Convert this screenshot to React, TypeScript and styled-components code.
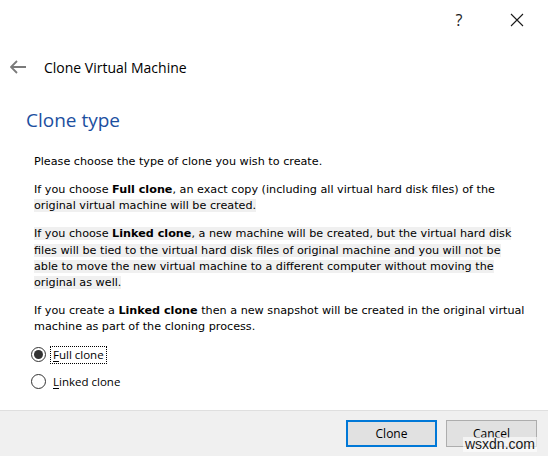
import React from "react";
import styled, { createGlobalStyle } from "styled-components";

const GlobalStyle = createGlobalStyle`
  html, body { margin: 0; padding: 0; background: #ffffff; }
  #root { width: 548px; height: 456px; }
`;

const Window = styled.div`
  position: relative;
  width: 548px;
  height: 456px;
  display: flex;
  flex-direction: column;
  background: #ffffff;
  overflow: hidden;
`;

const TitleBar = styled.div`
  display: flex;
  justify-content: flex-end;
  height: 40px;
  padding-right: 2px;
`;

const CaptionButton = styled.div`
  width: 58px;
  height: 40px;
  display: flex;
  align-items: center;
  justify-content: center;
  color: #1a1a1a;
  font-family: "Open Sans", "Noto Sans", sans-serif;
  font-size: 16px;
`;

const Header = styled.div`
  display: flex;
  align-items: center;
  height: 26px;
  margin-top: 14px;
  padding-left: 10px;
  gap: 17px;
`;

const HeaderTitle = styled.div`
  font-family: "Open Sans", "Noto Sans", sans-serif;
  font-size: 14px;
  color: #000000;
`;

const Content = styled.div`
  display: flex;
  flex-direction: column;
  padding-left: 26px;
  padding-top: 27px;
`;

const PageTitle = styled.h1`
  margin: 0;
  font-family: "Open Sans", "Noto Sans", sans-serif;
  font-weight: 400;
  font-size: 19px;
  line-height: 26px;
  color: #1c4f9f;
`;

const Body = styled.div`
  display: flex;
  flex-direction: column;
  gap: 11.7px;
  padding-left: 8px;
  margin-top: 21px;
  font-family: "DejaVu Sans", Verdana, sans-serif;
  font-size: 11.2px;
  line-height: 16.3px;
  color: #000000;
`;

const Para = styled.p`
  margin: 0;
  white-space: nowrap;
`;

const Hl = styled.span<{ $on: boolean }>`
  background: ${(p) => (p.$on ? "#f0f0f0" : "transparent")};
`;

const RadioGroup = styled.div`
  display: flex;
  flex-direction: column;
  gap: 9px;
  margin-top: 10px;
  padding-left: 5px;
`;

const RadioRow = styled.label`
  display: flex;
  align-items: center;
  gap: 8px;
  height: 18px;
  font-family: "Open Sans", "Noto Sans", sans-serif;
  font-size: 11.5px;
  color: #000;
`;

const RadioCircle = styled.span<{ $checked: boolean }>`
  box-sizing: border-box;
  width: 15px;
  height: 15px;
  border-radius: 50%;
  border: 1px solid #333333;
  background: #ffffff;
  display: flex;
  align-items: center;
  justify-content: center;
  &::after {
    content: "";
    width: 9px;
    height: 9px;
    border-radius: 50%;
    background: ${(p) => (p.$checked ? "#333333" : "transparent")};
  }
`;

const RadioLabel = styled.span<{ $focused: boolean }>`
  padding: 0 2px 1px 2px;
  outline: ${(p) => (p.$focused ? "1px dotted #000" : "none")};
  margin-left: -3px;
  u { text-decoration: underline; text-underline-offset: 2px; }
`;

const Footer = styled.div`
  margin-top: auto;
  height: 46px;
  border-top: 1px solid #dfdfdf;
  background: #f0f0f0;
  display: flex;
  justify-content: flex-end;
  align-items: flex-start;
  padding-top: 9px;
  padding-right: 11px;
  gap: 9px;
  box-sizing: border-box;
`;

const Button = styled.button<{ $default?: boolean }>`
  box-sizing: border-box;
  width: 91px;
  height: 27px;
  background: #e1e1e1;
  border: ${(p) => (p.$default ? "2px solid #0078d7" : "1px solid #adadad")};
  font-family: "Open Sans", "Noto Sans", sans-serif;
  font-size: 12px;
  color: #000;
  padding: 0;
`;

const Watermark = styled.div`
  position: absolute;
  right: 11px;
  bottom: 4px;
  font-family: "Liberation Sans", Arial, sans-serif;
  font-size: 14px;
  color: #1a1a1a;
  background: rgba(255, 255, 255, 0.6);
  padding: 0 2px;
  line-height: 15px;
`;

const BackArrow = () => (
  <svg width="17" height="14" viewBox="0 0 17 14">
    <path d="M1 7 H16 M7 1 L1 7 L7 13" stroke="#7a7a7a" strokeWidth="1.8" fill="none" />
  </svg>
);

const CloseIcon = () => (
  <svg width="14" height="14" viewBox="0 0 14 14">
    <path d="M1 1 L13 13 M13 1 L1 13" stroke="#1a1a1a" strokeWidth="1.1" fill="none" />
  </svg>
);

export default function App() {
  return (
    <>
      <GlobalStyle />
      <Window>
        <TitleBar>
          <CaptionButton>?</CaptionButton>
          <CaptionButton>
            <CloseIcon />
          </CaptionButton>
        </TitleBar>
        <Header>
          <BackArrow />
          <HeaderTitle>Clone Virtual Machine</HeaderTitle>
        </Header>
        <Content>
          <PageTitle>Clone type</PageTitle>
          <Body>
            <Para>Please choose the type of clone you wish to create.</Para>
            <Para>
              <Hl $on={false}>
                If you choose <b>Full clone</b>, an exact copy (including all virtual hard disk files) of the
              </Hl>
              <br />
              <Hl $on={true}>original virtual machine will be created.</Hl>
            </Para>
            <Para>
              <Hl $on={true}>
                If you choose <b>Linked clone</b>, a new machine will be created, but the virtual hard disk
              </Hl>
              <br />
              <Hl $on={true}>
                files will be tied to the virtual hard disk files of original machine and you will not be
              </Hl>
              <br />
              <Hl $on={true}>
                able to move the new virtual machine to a different computer without moving the
              </Hl>
              <br />
              <Hl $on={true}>original as well.</Hl>
            </Para>
            <Para>
              If you create a <b>Linked clone</b> then a new snapshot will be created in the original virtual
              <br />
              machine as part of the cloning process.
            </Para>
          </Body>
          <RadioGroup>
            <RadioRow>
              <RadioCircle $checked={true} />
              <RadioLabel $focused={true}>
                <u>F</u>ull clone
              </RadioLabel>
            </RadioRow>
            <RadioRow>
              <RadioCircle $checked={false} />
              <RadioLabel $focused={false}>
                <u>L</u>inked clone
              </RadioLabel>
            </RadioRow>
          </RadioGroup>
        </Content>
        <Footer>
          <Button $default>Clone</Button>
          <Button>Cancel</Button>
        </Footer>
        <Watermark>wsxdn.com</Watermark>
      </Window>
    </>
  );
}
